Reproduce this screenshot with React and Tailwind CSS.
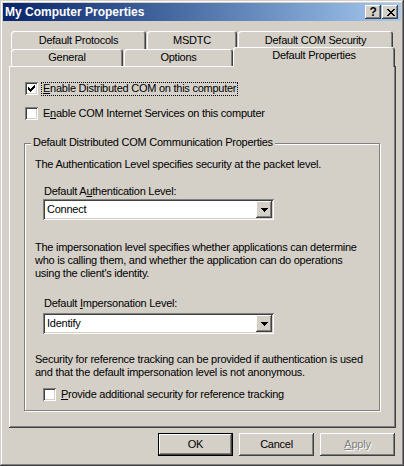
import React from 'react';

const raised = 'shadow-[inset_-1px_-1px_0_#404040,inset_1px_1px_0_#fff,inset_-2px_-2px_0_#808080]';
const sunken = 'shadow-[inset_1px_1px_0_#808080,inset_-1px_-1px_0_#fff,inset_2px_2px_0_#404040,inset_-2px_-2px_0_#d4d0c8]';
const tabEdge = 'shadow-[inset_1px_1px_0_#fff,inset_-1px_0_0_#404040,inset_-2px_0_0_#808080]';

// tiny pixel glyphs (check mark, close cross, combo arrow)
const Pixels = ({ rows, color = '#000', className = '' }) => {
  const w = rows[0].length;
  const h = rows.length;
  const cells = [];
  rows.forEach((row, y) => {
    row.split('').forEach((c, x) => {
      if (c === '#') cells.push(<rect key={x + '-' + y} x={x} y={y} width="1" height="1" fill={color} />);
    });
  });
  return (
    <svg width={w} height={h} viewBox={`0 0 ${w} ${h}`} className={className} shapeRendering="crispEdges">
      {cells}
    </svg>
  );
};

const CHECK = ['......#', '.....##', '#...###', '##.###.', '#####..', '.###...', '..#....'];
const CROSS = ['##....##', '.##..##.', '..####..', '...##...', '..####..', '.##..##.', '##....##'];
const ARROW = ['#######', '.#####.', '..###..', '...#...'];

const Checkbox = ({ checked }) => (
  <div className={`w-[13px] h-[13px] bg-white flex items-center justify-center shrink-0 ${sunken}`}>
    {checked && <Pixels rows={CHECK} />}
  </div>
);

const Combo = ({ value }) => (
  <div className={`w-[231px] h-[21px] bg-white flex items-center justify-between ${sunken}`}>
    <span className="pl-[4px]">{value}</span>
    <div className={`w-[16px] h-[17px] mr-[2px] bg-[#d4d0c8] flex items-center justify-center ${raised}`}>
      <Pixels rows={ARROW} />
    </div>
  </div>
);

const Tab = ({ label, width, className = '' }) => (
  <div className={`h-full flex items-center justify-center bg-[#d4d0c8] rounded-t-[3px] ${tabEdge} ${className}`} style={{ width }}>
    {label}
  </div>
);

const Button = ({ children, isDefault, disabled }) => (
  <div className={`w-[75px] h-[23px] ${isDefault ? 'border border-black' : ''}`}>
    <div
      className={`w-full h-full flex items-center justify-center ${raised} ${
        disabled ? 'text-[#808080] [text-shadow:1px_1px_0_#fff]' : ''
      }`}
    >
      {children}
    </div>
  </div>
);

export default function App() {
  return (
    <div className="w-[404px] h-[466px] bg-[#d4d0c8] p-[3px] flex flex-col shadow-[inset_-1px_-1px_0_#404040,inset_1px_1px_0_#d4d0c8,inset_-2px_-2px_0_#808080,inset_2px_2px_0_#fff] font-['Liberation_Sans',Arial,sans-serif] text-[11px] leading-[13px] tracking-[-0.25px] text-black select-none">
      {/* title bar */}
      <div className="h-[18px] flex items-center justify-between bg-linear-to-r from-[#0a246a] to-[#a6caf0] pl-[2px] pr-[3px]">
        <span className="text-white font-bold text-[12px] tracking-normal">My Computer Properties</span>
        <div className="flex gap-[1px]">
          <div className={`w-[16px] h-[14px] bg-[#d4d0c8] flex items-center justify-center font-bold text-[12px] leading-[12px] ${raised}`}>
            ?
          </div>
          <div className={`w-[16px] h-[14px] bg-[#d4d0c8] flex items-center justify-center pl-[1px] ${raised}`}>
            <Pixels rows={CROSS} />
          </div>
        </div>
      </div>

      {/* tabs */}
      <div className="mt-[10px] ml-[8px] flex gap-[1px] h-[18px]">
        <Tab label="Default Protocols" width={135} />
        <Tab label="MSDTC" width={90} />
        <Tab label="Default COM Security" width={155} />
      </div>
      <div className="ml-[8px] flex items-end h-[17px]">
        <Tab label="General" width={112} />
        <Tab label="Options" width={109} className="ml-[1px]" />
        <div
          className={`relative z-10 h-[20px] w-[162px] mb-[-1px] pb-[3px] flex items-center justify-center bg-[#d4d0c8] rounded-t-[3px] ${tabEdge}`}
        >
          Default Properties
        </div>
      </div>

      {/* page */}
      <div className="ml-[6px] w-[387px] h-[362px] pt-[16px] pl-[15px] flex flex-col shadow-[inset_-1px_-1px_0_#404040,inset_1px_1px_0_#fff,inset_-2px_-2px_0_#808080]">
        <div className="ml-[1px] flex items-center h-[13px]">
          <Checkbox checked />
          <span className="ml-[3px] h-[14px] flex items-center border border-dotted border-black pl-[1px] pr-[1px]">
            <span>
              <u>E</u>nable Distributed COM on this computer
            </span>
          </span>
        </div>
        <div className="ml-[1px] mt-[12px] flex items-center h-[13px]">
          <Checkbox />
          <span className="ml-[5px]">
            E<u>n</u>able COM Internet Services on this computer
          </span>
        </div>

        <div className="relative mt-[23px] w-[356px] border border-[#808080] shadow-[inset_1px_1px_0_#fff,1px_1px_0_#fff] pt-[14px] pb-[9px] pl-[10px] flex flex-col">
          <span className="absolute top-[-8px] left-[6px] px-[2px] bg-[#d4d0c8]">
            Default Distributed COM Communication Properties
          </span>
          <p>The Authentication Level specifies security at the packet level.</p>
          <p className="mt-[14px] ml-[9px]">
            Default A<u>u</u>thentication Level:
          </p>
          <div className="mt-[1px] ml-[8px]">
            <Combo value="Connect" />
          </div>
          <p className="mt-[21px] whitespace-nowrap">
            The impersonation level specifies whether applications can determine
            <br />
            who is calling them, and whether the application can do operations
            <br />
            using the client's identity.
          </p>
          <p className="mt-[17px] ml-[9px]">
            Default <u>I</u>mpersonation Level:
          </p>
          <div className="mt-[3px] ml-[8px]">
            <Combo value="Identify" />
          </div>
          <p className="mt-[19px] whitespace-nowrap">
            Security for reference tracking can be provided if authentication is used
            <br />
            and that the default impersonation level is not anonymous.
          </p>
          <div className="mt-[9px] ml-[8px] flex items-center h-[13px]">
            <Checkbox />
            <span className="ml-[5px]">
              <u>P</u>rovide additional security for reference tracking
            </span>
          </div>
        </div>
      </div>

      {/* buttons */}
      <div className="mt-[5px] flex justify-end gap-[6px] pr-[6px]">
        <Button isDefault>OK</Button>
        <Button>Cancel</Button>
        <Button disabled>
          <span>
            <u>A</u>pply
          </span>
        </Button>
      </div>
    </div>
  );
}
